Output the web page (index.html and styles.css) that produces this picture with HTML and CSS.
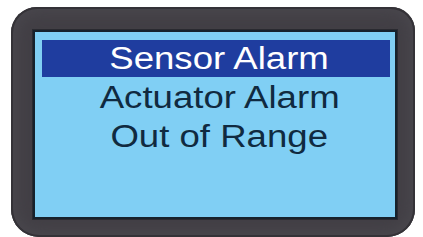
FILE: index.html
```html
<!DOCTYPE html>
<html>
<head>
<meta charset="utf-8">
<link rel="stylesheet" href="styles.css">
</head>
<body>
<div class="device">
  <div class="screen">
    <div class="item selected"><span>Sensor Alarm</span></div>
    <div class="item"><span>Actuator Alarm</span></div>
    <div class="item"><span>Out of Range</span></div>
  </div>
</div>
</body>
</html>
```
FILE: styles.css
```css
html, body {
  margin: 0;
  padding: 0;
  background: #ffffff;
}
body {
  width: 423px;
  height: 237px;
  overflow: hidden;
}
.device {
  margin: 7px 0 0 11px;
  width: 404px;
  height: 230px;
  box-sizing: border-box;
  border-radius: 26px 24px 28px 28px;
  background: #423f45;
  box-shadow: inset 0 0 0 2px #343237, inset 0 0 16px 5px #4a484e;
  padding: 23px 0 0 22px;
}
.screen {
  width: 364px;
  height: 189px;
  box-sizing: border-box;
  border: 2px solid #16222c;
  background: #80cff4;
  padding: 8px 5px 0 7px;
  display: flex;
  flex-direction: column;
  gap: 2px;
  box-shadow: 0 0 0 1px #2a2a30;
}
.item {
  height: 37px;
  line-height: 37px;
  padding-left: 7px;
  text-align: center;
  font-family: "Liberation Sans", Arial, sans-serif;
  font-size: 31px;
  color: #102a40;
}
.item span {
  display: inline-block;
  transform: scaleX(1.18);
}
.item.selected {
  background: #1f3d9f;
  color: #ffffff;
}
```
